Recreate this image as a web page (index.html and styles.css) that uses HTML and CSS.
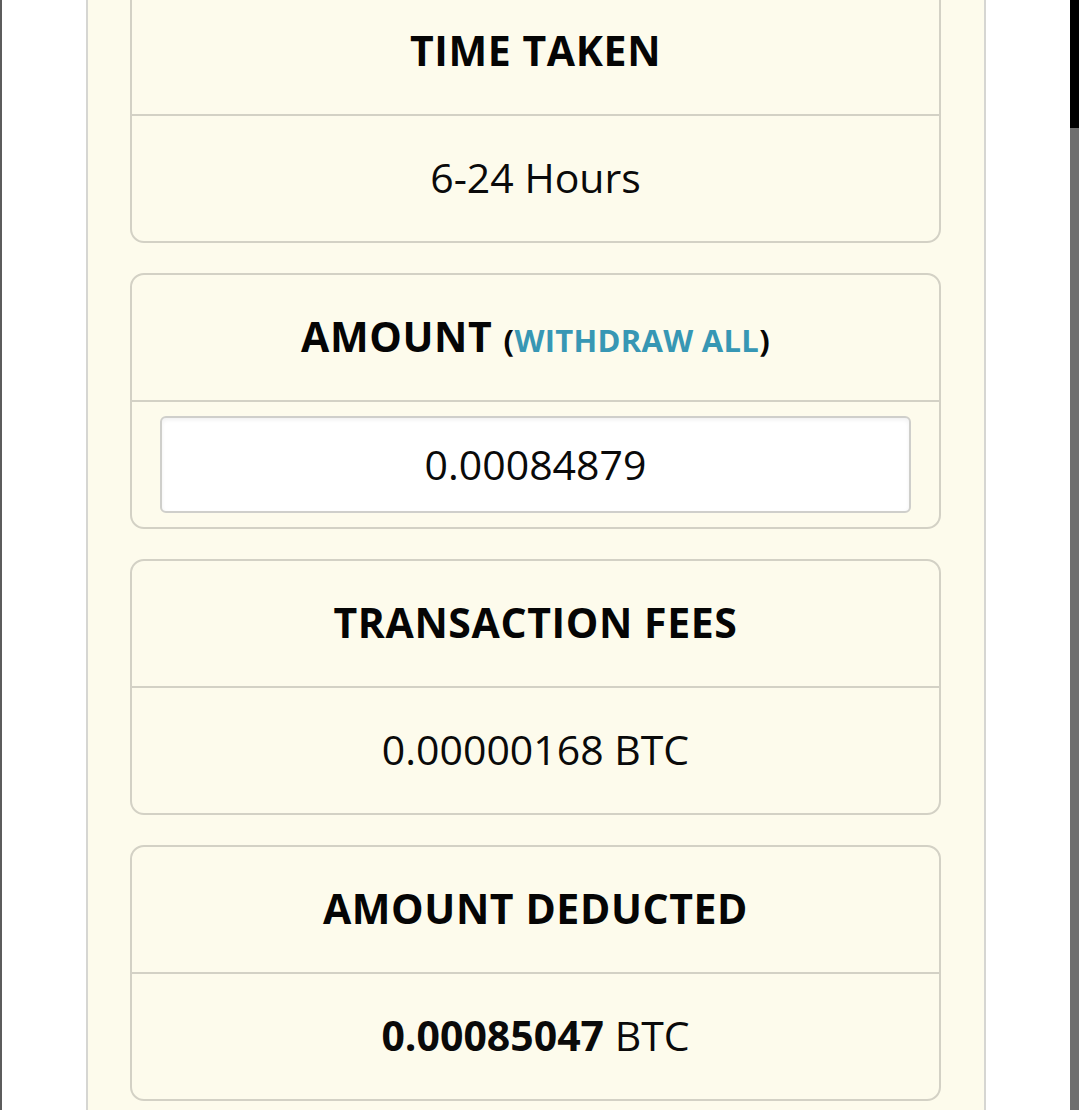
FILE: index.html
```html
<!DOCTYPE html>
<html>
<head>
<meta charset="utf-8">
<link rel="stylesheet" href="styles.css">
</head>
<body>
<div class="page">
  <div class="panel">
    <section class="card">
      <div class="card-head"><h2 class="title">TIME TAKEN</h2></div>
      <div class="card-body"><span class="value">6-24 Hours</span></div>
    </section>
    <section class="card">
      <div class="card-head"><h2 class="title">AMOUNT <span class="paren">(<a class="link" href="#">WITHDRAW ALL</a>)</span></h2></div>
      <div class="card-body card-body-input"><input class="amount-input" type="text" value="0.00084879"></div>
    </section>
    <section class="card">
      <div class="card-head"><h2 class="title">TRANSACTION FEES</h2></div>
      <div class="card-body"><span class="value">0.00000168 BTC</span></div>
    </section>
    <section class="card">
      <div class="card-head"><h2 class="title">AMOUNT DEDUCTED</h2></div>
      <div class="card-body"><span class="value"><strong>0.00085047</strong> BTC</span></div>
    </section>
  </div>
</div>
<div class="edge"></div>
<div class="scrollbar"><div class="thumb"></div></div>
</body>
</html>
```
FILE: styles.css
```css
html, body {
  margin: 0;
  padding: 0;
  background: #ffffff;
  overflow: hidden;
  height: 1110px;
}
body {
  font-family: "Open Sans", "Noto Sans", sans-serif;
  color: #111111;
}
.page {
  padding-left: 86px;
}
.panel {
  width: 900px;
  box-sizing: border-box;
  height: 1140px;
  margin-top: -13px;
  background: #fdfbec;
  border-left: 2px solid #d6d6d2;
  border-right: 2px solid #d6d6d2;
  padding: 0 43px 0 42px;
  display: flex;
  flex-direction: column;
  gap: 30px;
}
.card {
  border: 2px solid #d3d1c5;
  border-radius: 14px;
}
.card-head {
  height: 127px;
  box-sizing: border-box;
  padding-bottom: 4px;
  display: flex;
  align-items: center;
  justify-content: center;
  border-bottom: 2px solid #d3d1c5;
}
.title {
  margin: 0;
  font-size: 41px;
  font-weight: 700;
  letter-spacing: 0.6px;
  color: #050505;
}
.paren {
  font-size: 31px;
  letter-spacing: 0.3px;
}
.link {
  color: #3797b4;
  text-decoration: none;
}
.card-body {
  height: 125px;
  box-sizing: border-box;
  padding-bottom: 4px;
  display: flex;
  align-items: center;
  justify-content: center;
}
.value {
  font-size: 41px;
  font-weight: 400;
  color: #0a0a0a;
}
.value strong {
  font-weight: 700;
}
.card-body-input {
  padding: 14px 28px 14px;
  align-items: stretch;
}
.amount-input {
  flex: 1;
  min-width: 0;
  box-sizing: border-box;
  border: 2px solid #cfcfcb;
  border-radius: 6px;
  background: #ffffff;
  box-shadow: inset 0 2px 4px rgba(0, 0, 0, 0.06);
  font-family: "Open Sans", "Noto Sans", sans-serif;
  font-size: 41px;
  color: #0a0a0a;
  text-align: center;
  padding: 0 0 2px;
  outline: none;
}
.edge {
  position: fixed;
  left: 0;
  top: 0;
  width: 2px;
  height: 1110px;
  background: #5c5c5c;
}
.scrollbar {
  position: fixed;
  right: 0;
  top: 0;
  width: 9px;
  height: 1110px;
  background: #6e6e6e;
}
.thumb {
  height: 128px;
  background: #000000;
}
```
